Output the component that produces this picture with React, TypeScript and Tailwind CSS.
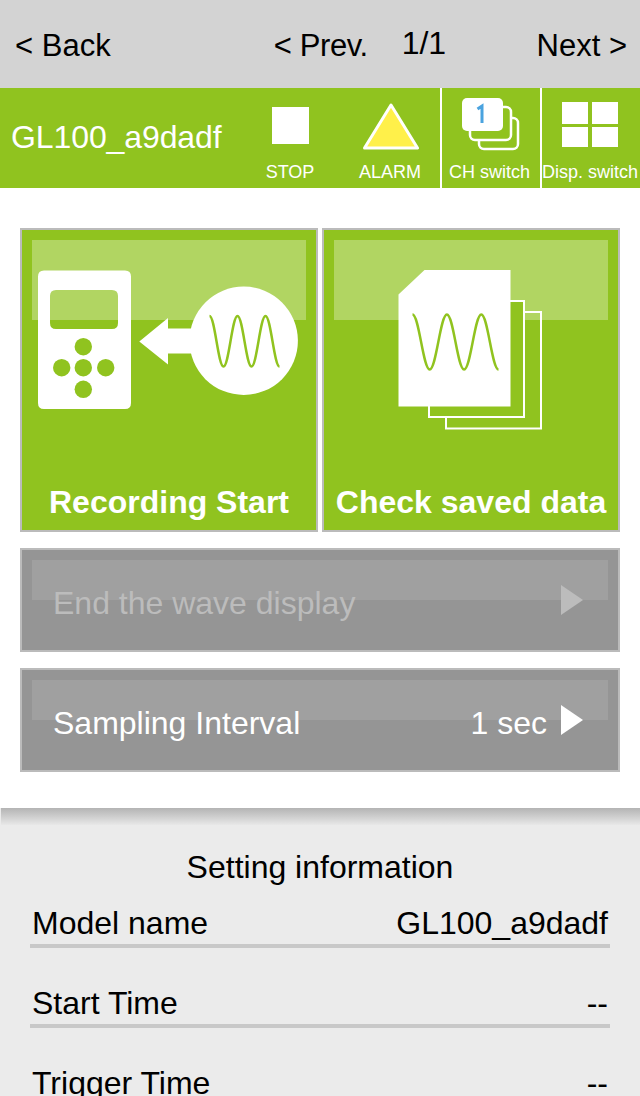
import React from "react";

const G = "#90c31f";
const font = { fontFamily: '"Liberation Sans", Arial, sans-serif' };

const wave = (x0: number, step: number, top: number, bottom: number) => {
  const c = step * 0.38;
  let d = `M${x0} ${top}`;
  let x = x0;
  for (let i = 0; i < 5; i++) {
    const y0 = i % 2 === 0 ? top : bottom;
    const y1 = i % 2 === 0 ? bottom : top;
    d += ` C${x + c} ${y0} ${x + step - c} ${y1} ${x + step} ${y1}`;
    x += step;
  }
  return d;
};

function Stat({ label, children, pad }: { label: string; children: React.ReactNode; pad?: string }) {
  return (
    <div className={`relative flex h-full w-[100px] flex-col items-center justify-end pb-[5px] text-[18px] leading-[22px] whitespace-nowrap text-white ${pad ?? ""}`}>
      {children}
      <span>{label}</span>
    </div>
  );
}

function Row({ label, value }: { label: string; value: string }) {
  return (
    <div className="flex h-[40px] items-center justify-between px-[2px] text-[32px] leading-[40px] text-black">
      <span>{label}</span>
      <span>{value}</span>
    </div>
  );
}

function GrayButton({ label, value, disabled }: { label: string; value?: string; disabled?: boolean }) {
  return (
    <div className="relative flex h-[104px] items-center border-2 border-[#bbbbbb] bg-[#959595] pr-[35px] pl-[31px] text-[32px] leading-[40px]">
      <div className="absolute top-[10px] right-[10px] left-[10px] h-[40px] bg-white/10" />
      <span className={`relative mt-[6px] ${disabled ? "text-[#bcbcbc]" : "text-white"}`}>{label}</span>
      {value && <span className="relative mt-[6px] mr-[14px] ml-auto text-white">{value}</span>}
      <svg width="22" height="30" viewBox="0 0 22 30" className={`relative ${value ? "" : "ml-auto"}`}>
        <path d="M0 0L22 15L0 30Z" fill={disabled ? "#bcbcbc" : "#ffffff"} />
      </svg>
    </div>
  );
}

export default function App() {
  return (
    <div className="flex h-[1096px] w-[640px] flex-col overflow-hidden bg-white" style={font}>
      <div className="flex h-[88px] shrink-0 items-center justify-between bg-[#d3d3d3] pt-[4px] text-[31px] leading-[36px] text-black">
        <span className="ml-[15px] w-[259px]">&lt; Back</span>
        <span className="w-[128px] tracking-[-0.4px]">&lt; Prev.</span>
        <span className="mb-[7px] w-[135px] text-[32px]">1/1</span>
        <span className="mr-[13px] whitespace-nowrap">Next &gt;</span>
      </div>

      <div className="flex h-[100px] shrink-0 items-stretch" style={{ backgroundColor: G }}>
        <div className="flex-1 pt-[29px] pl-[11px] text-[32px] leading-[40px] tracking-[-0.1px] whitespace-nowrap text-white">GL100_a9dadf</div>
        <Stat label="STOP">
          <div className="absolute top-[19px] left-[32px] h-[37px] w-[37px] bg-white blur-[0.5px]" />
        </Stat>
        <Stat label="ALARM">
          <svg className="absolute top-[14px] left-[22px] blur-[0.4px]" width="58" height="50" viewBox="0 0 58 50">
            <path d="M29 3L55.5 46H2.5Z" fill="#fff04a" stroke="#ffffff" strokeWidth="3" strokeLinejoin="round" />
          </svg>
        </Stat>
        <Stat label="CH switch" pad="border-l-2 border-white pr-[3px]">
          <svg className="absolute top-[8px] left-[18px] blur-[0.4px]" width="64" height="58" viewBox="0 0 64 58">
            <rect x="19" y="22" width="39" height="31" rx="5" fill="none" stroke="#ffffff" strokeWidth="2.5" />
            <rect x="10" y="11" width="41" height="33" rx="5" fill={G} stroke="#ffffff" strokeWidth="2.5" />
            <rect x="2" y="2" width="41" height="33" rx="5" fill="#ffffff" />
            <path d="M17.5 13L22 10V27" fill="none" stroke="#4aa3df" strokeWidth="3" />
          </svg>
        </Stat>
        <Stat label="Disp. switch" pad="border-l-2 border-white pr-[2px]">
          <svg className="absolute top-[13px] left-[19px] blur-[0.3px]" width="58" height="46" viewBox="0 0 58 46">
            <path d="M1 1H27V23H1ZM31 1H57V23H31ZM1 26H27V46H1ZM31 26H57V46H31Z" fill="#ffffff" />
          </svg>
        </Stat>
      </div>

      <div className="flex shrink-0 flex-col gap-4 px-5 pt-10">
        <div className="flex gap-1">
          <div className="relative h-[304px] flex-1 border-2 border-[#bbbbbb]" style={{ backgroundColor: G }}>
            <div className="absolute top-[10px] right-[10px] left-[10px] h-[80px] bg-white/30" />
            <svg className="absolute top-[-2px] left-[-2px]" width="298" height="304" viewBox="20 228 298 304">
              <path fillRule="evenodd" fill="#ffffff" d="M44 270.5H125Q131 270.5 131 276.5V403Q131 409 125 409H44Q38 409 38 403V276.5Q38 270.5 44 270.5ZM56 290Q50 290 50 296V323Q50 329 56 329H112Q118 329 118 323V296Q118 290 112 290Z" />
              <g fill={G}>
                <circle cx="83.3" cy="346.7" r="8.7" />
                <circle cx="61.7" cy="367.7" r="8.7" />
                <circle cx="83.3" cy="367.7" r="8.7" />
                <circle cx="105.7" cy="367.7" r="8.7" />
                <circle cx="83.3" cy="389.3" r="8.7" />
              </g>
              <path fill="#ffffff" d="M139.3 341.5L168 318V328.5H200V353.5H168V364.5Z" />
              <circle cx="243.7" cy="340.8" r="54.2" fill="#ffffff" />
              <path d={wave(209.5, 14, 316, 366.5)} fill="none" stroke={G} strokeWidth="2.5" />
            </svg>
            <div className="absolute right-0 bottom-[8px] left-0 text-center text-[32px] leading-[40px] font-bold whitespace-nowrap text-white">Recording Start</div>
          </div>
          <div className="relative h-[304px] flex-1 border-2 border-[#bbbbbb]" style={{ backgroundColor: G }}>
            <div className="absolute top-[10px] right-[10px] left-[10px] h-[80px] bg-white/30" />
            <svg className="absolute top-[-2px] left-[-2px]" width="298" height="304" viewBox="322 228 298 304">
              <rect x="446" y="312" width="95" height="116.5" fill="none" stroke="#ffffff" strokeWidth="2" />
              <rect x="429" y="301" width="95" height="116" fill={G} stroke="#ffffff" strokeWidth="2" />
              <path fill="#ffffff" d="M424.5 270H510.5V406.5H398.5V294.5Z" />
              <path d={wave(412.5, 17.2, 314.5, 369.5)} fill="none" stroke={G} strokeWidth="2.5" />
            </svg>
            <div className="absolute right-0 bottom-[8px] left-0 text-center text-[32px] leading-[40px] font-bold whitespace-nowrap text-white">Check saved data</div>
          </div>
        </div>
        <GrayButton label="End the wave display" disabled />
        <GrayButton label="Sampling Interval" value="1 sec" />
      </div>

      <div className="mt-9 min-h-0 flex-1 overflow-hidden bg-[#ebebeb]">
        <div className="ml-px h-[17px] bg-gradient-to-b from-[#b4b4b4] to-[#e8e8e8]" />
        <div className="px-[30px]">
          <div className="pt-[22px] text-center text-[32px] leading-[40px] text-black">Setting information</div>
          <div className="mt-[16px]">
            <Row label="Model name" value="GL100_a9dadf" />
            <div className="mt-px h-1 bg-[#c8c8c8]" />
            <div className="mt-[35px]">
              <Row label="Start Time" value="--" />
            </div>
            <div className="mt-px h-1 bg-[#c8c8c8]" />
            <div className="mt-[35px]">
              <Row label="Trigger Time" value="--" />
            </div>
          </div>
        </div>
      </div>
    </div>
  );
}
